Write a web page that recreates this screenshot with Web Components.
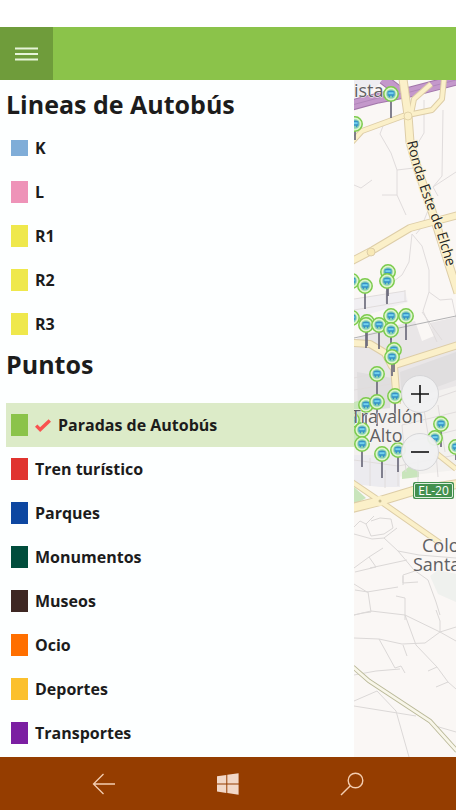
<!DOCTYPE html>
<html lang="es">
<head>
<meta charset="utf-8">
<meta name="viewport" content="width=device-width, initial-scale=1">
<title>Autobús</title>
<style>
  html, body {
    margin: 0;
    height: 100%;
  }
  body {
    font-family: "Open Sans", "Noto Sans", sans-serif;
    color: #1c1c1c;
    background: #fff;
  }
</style>
</head>
<body>
<bus-app>
  <app-header slot="header"></app-header>
  <layer-drawer slot="drawer">
    <layer-group>
      <span slot="title">Lineas de Autobús</span>
      <layer-item color="#7fadd8" short>K</layer-item>
      <layer-item color="#ee93b8">L</layer-item>
      <layer-item color="#efe84c">R1</layer-item>
      <layer-item color="#efe84c">R2</layer-item>
      <layer-item color="#efe84c">R3</layer-item>
    </layer-group>
    <layer-group spaced>
      <span slot="title">Puntos</span>
      <layer-item color="#8bc34a" checked>Paradas de Autobús</layer-item>
      <layer-item color="#e0342f">Tren turístico</layer-item>
      <layer-item color="#0d47a1">Parques</layer-item>
      <layer-item color="#004d3c">Monumentos</layer-item>
      <layer-item color="#3e2723">Museos</layer-item>
      <layer-item color="#ff6f00">Ocio</layer-item>
      <layer-item color="#fbc02d">Deportes</layer-item>
      <layer-item color="#7b1fa2">Transportes</layer-item>
    </layer-group>
  </layer-drawer>
  <city-map slot="map"></city-map>
  <system-nav slot="nav"></system-nav>
</bus-app>

<script>
class BusApp extends HTMLElement {
  connectedCallback() {
    this.attachShadow({ mode: "open" });
    this.shadowRoot.innerHTML = `
      <style>
        :host {
          display: flex;
          flex-direction: column;
          height: 100vh;
          padding-top: 27px;
          box-sizing: border-box;
        }
        main {
          flex: 1;
          min-height: 0;
          display: grid;
          grid-template-columns: minmax(0, 354px) minmax(80px, 1fr);
          grid-template-rows: minmax(0, 1fr);
        }
      </style>
      <slot name="header"></slot>
      <main>
        <slot name="drawer"></slot>
        <slot name="map"></slot>
      </main>
      <slot name="nav"></slot>
    `;
  }
}

class AppHeader extends HTMLElement {
  connectedCallback() {
    this.attachShadow({ mode: "open" });
    this.shadowRoot.innerHTML = `
      <style>
        :host {
          display: flex;
          height: 53px;
          background: #8bc34a;
        }
        button {
          width: 53px;
          padding: 0;
          border: 0;
          background: #6f9c3b;
          display: flex;
          align-items: center;
          justify-content: center;
          cursor: pointer;
        }
      </style>
      <button type="button" aria-label="Menú">
        <svg width="23" height="14" viewBox="0 0 23 14" stroke="#e6f4d8" stroke-width="2">
          <path d="M0 1.5h23M0 7h23M0 12.5h23"/>
        </svg>
      </button>
    `;
  }
}

class LayerDrawer extends HTMLElement {
  connectedCallback() {
    this.attachShadow({ mode: "open" });
    this.shadowRoot.innerHTML = `
      <style>
        :host {
          display: block;
          padding: 6px 0 0 6px;
          overflow: hidden;
          background: #fdffff;
        }
      </style>
      <slot></slot>
    `;
  }
}

class LayerGroup extends HTMLElement {
  connectedCallback() {
    this.attachShadow({ mode: "open" });
    this.shadowRoot.innerHTML = `
      <style>
        :host { display: block; }
        h2 {
          margin: 0 0 4px;
          font-size: 25px;
          line-height: 36px;
          font-weight: 700;
        }
        :host([spaced]) h2 { margin-bottom: 21px; }
      </style>
      <h2><slot name="title"></slot></h2>
      <slot></slot>
    `;
  }
}

class LayerItem extends HTMLElement {
  connectedCallback() {
    this.attachShadow({ mode: "open" });
    this.shadowRoot.innerHTML = `
      <style>
        :host { display: block; }
        label {
          display: flex;
          align-items: center;
          gap: 7px;
          height: 44px;
          padding-left: 5px;
          font-size: 16px;
          font-weight: 700;
          cursor: pointer;
        }
        label:has(input:checked) { background: #dcebc8; }
        input {
          appearance: none;
          flex: none;
          width: 17px;
          height: 22px;
          margin: 0;
          background: var(--swatch);
        }
        :host([short]) input { height: 16px; }
        svg { display: none; }
        input:checked + svg { display: block; }
      </style>
      <label>
        <input type="checkbox">
        <svg width="16" height="13" viewBox="0 0 16 13" fill="none" stroke="#f9524f" stroke-width="3.4">
          <path d="M1.2 6.6l4 4L14.8 1.4"/>
        </svg>
        <span><slot></slot></span>
      </label>
    `;
    const input = this.shadowRoot.querySelector("input");
    input.style.setProperty("--swatch", this.getAttribute("color"));
    input.checked = this.hasAttribute("checked");
  }
}

// [x, y, bottom of the stem]
const STOPS = [
  [391, 94, 118], [355, 124, 140], [352, 281, 290], [352, 318, 330],
  [388, 272, 296], [387, 281, 304], [365, 286, 309],
  [391, 316, 340], [406, 316, 340], [367, 322, 346], [366, 325, 348],
  [379, 325, 349], [391, 330, 349], [394, 350, 372], [392, 357, 376],
  [377, 374, 398], [395, 396, 420], [366, 405, 428], [377, 402, 426],
  [352, 420, 440], [362, 430, 452], [362, 444, 467], [382, 454, 478],
  [398, 450, 472], [435, 438, 445], [441, 424, 447], [456, 447, 460]
];

class CityMap extends HTMLElement {
  connectedCallback() {
    this.attachShadow({ mode: "open" });
    const stems = STOPS.map(([x, y, end]) => `<path d="M${x} ${y + 7}V${end}"/>`).join("");
    const pins = STOPS.map(([x, y]) => `<use href="#stop" x="${x}" y="${y}"/>`).join("");
    this.shadowRoot.innerHTML = `
      <style>
        :host {
          display: block;
          position: relative;
          overflow: hidden;
          background: #faf7f5;
        }
        .canvas {
          display: block;
          width: 100%;
          height: 100%;
        }
        .place {
          font-size: 18px;
          fill: #606063;
          stroke: #faf7f5;
          stroke-width: 1;
          paint-order: stroke;
        }
        .road {
          font-size: 14px;
          fill: #262626;
          stroke: #fdf3d2;
          stroke-width: 2;
          paint-order: stroke;
        }
        .shield {
          font-size: 12px;
          fill: #fff;
        }
        .zoom {
          position: absolute;
          top: 295px;
          right: 17px;
          display: flex;
          flex-direction: column;
          gap: 20px;
        }
        button {
          width: 38px;
          height: 38px;
          padding: 0;
          border: 1px solid #d6d6d8;
          border-radius: 50%;
          background: rgba(240, 240, 241, 0.95);
          display: flex;
          align-items: center;
          justify-content: center;
          cursor: pointer;
        }
      </style>
      <svg class="canvas" viewBox="354 80 102 677" preserveAspectRatio="xMinYMin slice" fill="none">
        <defs>
          <g id="stop">
            <circle r="7.2" fill="#dff5cc" stroke="#7ccb4c" stroke-width="1.5"/>
            <circle r="4.8" fill="#8cd3b4"/>
            <path d="M-3.5 -2.6q3.5 -1.6 7 0v4.4h-1.2v1.4h-1.4v-1.4h-1.8v1.4h-1.4v-1.4h-1.2z" fill="#3692c8"/>
            <path d="M-2.6 -1.8h5.2v2h-5.2z" fill="#74d3ee"/>
          </g>
          <path id="ronda" d="M407 142C413 169 424 202 434 225C440 243 445 262 455 293"/>
        </defs>

        <!-- built-up areas and parks -->
        <path d="M354 340L366 334L394 326L415 321L422 341L434 336L430 323L456 317V470H354z" fill="#e9e6e7"/>
        <path d="M354 416L396 402L456 386V470L354 482z" fill="#f3f1ef"/>
        <path d="M357 372L392 378L390 408L358 412zM400 372L456 352V380L402 400z" fill="#e0dedf"/>
        <path d="M354 299L405 291L408 302L354 319z" fill="#f1eff2"/>
        <path d="M354 455H400V487H380L354 484z" fill="#ecebef"/>
        <path d="M430 576L438 570L456 574V602L438 594z" fill="#eff1ee"/>
        <path d="M354 402L361 400V440L354 446zM354 487L366 498L354 505zM402 472L410 466L419 472V477L402 479z" fill="#c9e5bc"/>
        <path d="M354 80H384L366 95L354 98z" fill="#eeedf1"/>

        <!-- minor streets -->
        <g stroke="#e0dcdc">
          <path d="M383 126L380 134L391 153L397 170V195H382M397 170L414 168M443 110L442 176L433 187M456 172L433 187L438 196M424 100V133L418 143M397 195L406 215M354 185L361 188L372 180"/>
          <path d="M412 234L409 262L402 275L390 284M412 234L422 246L429 270V292L423 311L437 342M429 292L440 300L452 299L456 318M422 312L442 340M354 299L405 291M354 310L407 301M386 291V303M405 290V302"/>
          <path d="M429 208L421 228L416 234"/>
          <path d="M354 378L376 373M354 390L391 384M407 408L456 391M402 425L456 412M400 444L456 430M424 410L430 446M438 405L445 452M402 425L406 472M354 460L398 466L456 455M370 458V486M385 470V488M398 466V486M436 453L438 477M418 458V482"/>
        </g>
        <g stroke="#dbd8d7">
          <path d="M354 527L360 521L366 524L374 516M366 524L371 536L384 534L393 528L391 519L380 518L371 521M354 534L372 539L384 538L397 528M384 538L398 551L419 555L456 558M354 568L369 557L383 548M369 557L376 567L355 572M370 568L407 560M354 584L367 592L398 587M403 585V575L424 568M403 576V583L418 582M354 615L363 613L371 612L368 592L355 590M405 620V598L396 596M398 551L414 570L428 580L436 602L440 615"/>
          <path d="M354 615L371 611L405 615L440 632L456 641M440 632L456 627M440 632V621L436 610M354 638L379 639L402 644L425 643L440 632M379 639L395 668L401 666L405 673M403 645L407 656M405 615L416 645L437 667L448 682L456 689M354 675L376 671L400 669M437 667L428 671M448 682L436 687M354 701L377 691L396 711L409 757M354 706L416 716M432 725L456 732"/>
        </g>
        <path d="M354 338L394 329L456 316" stroke="#b1b1b3"/>

        <!-- motorway -->
        <path d="M352 105L378 98L410 92L456 80M383 79L400 92" stroke="#a276aa" stroke-width="11"/>
        <path d="M352 105L378 98L410 92L456 80M383 79L400 92" stroke="#c498cb" stroke-width="9"/>
        <path d="M352 105L378 98L410 92L456 80" stroke="#b187ba"/>

        <!-- main roads: casing first, then fill -->
        <g stroke="#ddcda7" stroke-linejoin="round">
          <path d="M352 142L362 131L403 116L432 110L442 99L444 79M411 114L414 99L431 84" stroke-width="6"/>
          <path d="M403 79L408 115L410 142L418 170L431 208L443 246L458 293" stroke-width="9"/>
          <path d="M352 261L373 250L410 228L458 215M353 343L370 344L385 353L392 366L458 345M394 366L397 404" stroke-width="8"/>
          <path d="M352 508L380 501L413 491L458 484" stroke-width="10"/>
          <path d="M352 482L380 501L440 543M436 453L456 469" stroke-width="6"/>
        </g>
        <g stroke="#fbf0c9" stroke-linejoin="round">
          <path d="M352 142L362 131L403 116L432 110L442 99L444 79M411 114L414 99L431 84" stroke-width="4"/>
          <path d="M403 79L408 115L410 142L418 170L431 208L443 246L458 293" stroke-width="7"/>
          <path d="M352 261L373 250L410 228L458 215M353 343L370 344L385 353L392 366L458 345M394 366L397 404" stroke-width="6"/>
          <path d="M352 508L380 501L413 491L458 484" stroke-width="8"/>
          <path d="M352 482L380 501L440 543M436 453L456 469" stroke-width="4"/>
        </g>
        <circle cx="408" cy="116" r="4" fill="#fbf0c9" stroke="#e3d4a9"/>
        <circle cx="371" cy="252" r="4" fill="#f8e9b6" stroke="#ddcda7"/>
        <circle cx="380" cy="501" r="5" fill="#fbf0c9"/>
        <circle cx="380" cy="501" r="1.5" fill="#c9bd92"/>

        <!-- railway -->
        <path d="M353 667L369 681L430 721L457 751" stroke="#b9b898" stroke-width="4.5"/>
        <path d="M353 667L369 681L430 721L457 751" stroke="#f8f6e9" stroke-width="2.8"/>

        <g stroke="#6d6c7c" stroke-width="1.7">${stems}</g>
        ${pins}

        <text class="road"><textPath href="#ronda">Ronda Este de Elche</textPath></text>
        <text class="place" x="354" y="97">ista</text>
        <text class="place" x="387" y="423" text-anchor="middle">Travalón</text>
        <text class="place" x="386" y="442" text-anchor="middle">Alto</text>
        <text class="place" x="422" y="552">Colo</text>
        <text class="place" x="413" y="571">Santa</text>

        <rect x="413" y="482" width="41" height="17" rx="2" fill="#43904f"/>
        <rect x="414.5" y="483.5" width="38" height="14" rx="1.5" stroke="#dff0df"/>
        <text class="shield" x="433.5" y="495" text-anchor="middle">EL-20</text>
      </svg>
      <div class="zoom">
        <button type="button" aria-label="Acercar">
          <svg width="18" height="18" viewBox="0 0 18 18" stroke="#111" stroke-width="1.6"><path d="M0 9h18M9 0v18"/></svg>
        </button>
        <button type="button" aria-label="Alejar">
          <svg width="18" height="18" viewBox="0 0 18 18" stroke="#111" stroke-width="1.6"><path d="M0 9h18"/></svg>
        </button>
      </div>
    `;
  }
}

class SystemNav extends HTMLElement {
  connectedCallback() {
    this.attachShadow({ mode: "open" });
    this.shadowRoot.innerHTML = `
      <style>
        :host { display: block; background: #953d00; }
        nav {
          display: grid;
          grid-template-columns: repeat(3, 1fr);
          height: 53px;
          padding: 0 42px;
        }
        button {
          padding: 0;
          border: 0;
          background: none;
          display: flex;
          align-items: center;
          justify-content: center;
          cursor: pointer;
        }
      </style>
      <nav>
        <button type="button" aria-label="Atrás">
          <svg width="24" height="22" viewBox="0 0 24 22" fill="none" stroke="#f3cdb0" stroke-width="1.3">
            <path d="M11.5 1L1.5 11l10 10M1.5 11H23"/>
          </svg>
        </button>
        <button type="button" aria-label="Inicio">
          <svg width="22" height="22" viewBox="0 0 22 22" fill="#f2d8c8">
            <path d="M0 3.2L9.3 2v8.4H0zM10.3 1.8L21.6 0.2v10.2H10.3zM0 11.4h9.3v8.5L0 18.6zM10.3 11.4h11.3v10.3l-11.3-1.6z"/>
          </svg>
        </button>
        <button type="button" aria-label="Buscar">
          <svg width="24" height="24" viewBox="0 0 24 24" fill="none" stroke="#f3cdb0" stroke-width="1.4">
            <circle cx="15.5" cy="8.5" r="7.3"/>
            <path d="M10.3 13.7L1 23"/>
          </svg>
        </button>
      </nav>
    `;
  }
}

customElements.define("bus-app", BusApp);
customElements.define("app-header", AppHeader);
customElements.define("layer-drawer", LayerDrawer);
customElements.define("layer-group", LayerGroup);
customElements.define("layer-item", LayerItem);
customElements.define("city-map", CityMap);
customElements.define("system-nav", SystemNav);
</script>
</body>
</html>
